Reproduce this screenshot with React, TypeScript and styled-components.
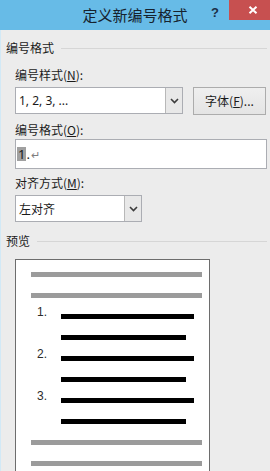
import React from "react";
import styled, { createGlobalStyle } from "styled-components";

const Global = createGlobalStyle`
  html, body { margin: 0; padding: 0; background: #ececec; }
  * { box-sizing: border-box; }
`;

const CJK = `"Noto Sans CJK SC", "Noto Sans", sans-serif`;

const Window = styled.div`
  width: 270px;
  height: 471px;
  overflow: hidden;
  background: #ececec;
  display: flex;
  flex-direction: column;
  font-family: ${CJK};
  color: #1b1b1b;
`;

const TitleBar = styled.div`
  flex: none;
  height: 30px;
  background: #67bbe7;
  display: grid;
  grid-template-columns: 1fr auto 1fr;
  align-items: start;
`;

const Title = styled.div`
  grid-column: 2;
  font-size: 15px;
  line-height: 30px;
  color: #16222e;
`;

const Controls = styled.div`
  grid-column: 3;
  display: flex;
  justify-content: flex-end;
`;

const HelpButton = styled.div`
  width: 28px;
  height: 20px;
  font: bold 13px "Liberation Sans", sans-serif;
  line-height: 25px;
  text-align: center;
  color: #1b2e46;
`;

const CloseButton = styled.div`
  width: 41px;
  height: 20px;
  background: #c75050;
  display: flex;
  align-items: center;
  justify-content: center;
  padding-left: 6px;
`;

const Body = styled.div`
  flex: 1;
  display: flex;
  flex-direction: column;
  padding: 10px 3px 0 5px;
  border-left: 1px solid #d2e9f6;
`;

const GroupHeader = styled.div<{ $mt: number }>`
  display: flex;
  align-items: center;
  height: 16px;
  margin-top: ${(p) => p.$mt}px;
  font-size: 12px;
  line-height: 16px;
`;

const GroupRule = styled.div`
  flex: 1;
  height: 1px;
  margin-left: 7px;
  background: #d6d6d6;
`;

const Section = styled.div`
  display: flex;
  flex-direction: column;
  padding-left: 9px;
`;

const Label = styled.div<{ $mt: number }>`
  margin-top: ${(p) => p.$mt}px;
  font-size: 12px;
  line-height: 16px;
  height: 16px;
`;

const U = styled.span`
  text-decoration: underline;
`;

const Row = styled.div<{ $mt: number }>`
  display: flex;
  align-items: flex-start;
  gap: 10px;
  margin-top: ${(p) => p.$mt}px;
`;

const Select = styled.div<{ $w: number; $mt?: number }>`
  width: ${(p) => p.$w}px;
  height: 27px;
  margin-top: ${(p) => p.$mt ?? 0}px;
  border: 1px solid #abadb3;
  background: #fff;
  display: flex;
  flex: none;
`;

const SelectValue = styled.div<{ $latin?: boolean }>`
  flex: 1;
  padding-left: 3px;
  font-family: ${(p) => (p.$latin ? `"Noto Sans", sans-serif` : CJK)};
  font-size: 12px;
  line-height: 25px;
  color: #1b1b1b;
`;

const SelectArrow = styled.div`
  width: 17px;
  border-left: 1px solid #b8b8b8;
  background: #e8e8e8;
  display: flex;
  align-items: center;
  justify-content: center;
`;

const Button = styled.div`
  width: 73px;
  height: 28px;
  border: 1px solid #acacac;
  background: linear-gradient(#efefef, #e4e4e4);
  font-size: 12px;
  line-height: 26px;
  text-align: center;
  flex: none;
`;

const Input = styled.div<{ $mt: number }>`
  margin-top: ${(p) => p.$mt}px;
  height: 30px;
  border: 1px solid #abadb3;
  background: #fff;
  display: flex;
  align-items: center;
  padding-left: 1px;
  font-family: "Noto Sans", sans-serif;
  font-size: 13px;
`;

const Selected = styled.span`
  background: #a0a0a0;
  color: #1b1b1b;
  line-height: 14px;
  padding: 0 1px;
`;

const Period = styled.span`
  color: #1b1b1b;
`;

const Pilcrow = styled.span`
  color: #7e7e7e;
  font-size: 11px;
  margin-left: 1px;
`;

const Preview = styled.div`
  flex: none;
  margin-top: 10px;
  width: 195px;
  height: 260px;
  border: 1px solid #6d6d6d;
  background: #fff;
  padding-top: 4px;
  display: flex;
  flex-direction: column;
`;

const PreviewRow = styled.div`
  height: 21px;
  display: flex;
  align-items: flex-start;
  flex: none;
`;

const GreyBar = styled.div`
  margin: 8px 0 0 15px;
  width: 171px;
  height: 5px;
  background: #9b9b9b;
`;

const Num = styled.div`
  width: 45px;
  padding-left: 21px;
  font-family: "Liberation Sans", Arial, sans-serif;
  font-size: 12px;
  line-height: 13px;
  color: #2b2b2b;
`;

const BlackBar = styled.div<{ $w: number }>`
  margin-top: 8px;
  width: ${(p) => p.$w}px;
  height: 5px;
  background: #000;
`;

const Chevron = () => (
  <svg width="9" height="6" viewBox="0 0 9 6">
    <path d="M1 1 L4.5 4.5 L8 1" fill="none" stroke="#3c3c3c" strokeWidth="1.6" />
  </svg>
);

const CloseIcon = () => (
  <svg width="10" height="8" viewBox="0 0 10 8">
    <path d="M1.5 0.8 L8.5 7.2 M8.5 0.8 L1.5 7.2" stroke="#fff" strokeWidth="2" />
  </svg>
);

const Item = ({ n }: { n: number }) => (
  <>
    <PreviewRow>
      <Num>{n}.</Num>
      <BlackBar $w={133} />
    </PreviewRow>
    <PreviewRow>
      <Num />
      <BlackBar $w={125} />
    </PreviewRow>
  </>
);

export default function App() {
  return (
    <>
      <Global />
      <Window>
        <TitleBar>
          <Title>定义新编号格式</Title>
          <Controls>
            <HelpButton>?</HelpButton>
            <CloseButton>
              <CloseIcon />
            </CloseButton>
          </Controls>
        </TitleBar>
        <Body>
          <GroupHeader $mt={0}>
            编号格式
            <GroupRule />
          </GroupHeader>
          <Section>
            <Label $mt={11}>
              编号样式(<U>N</U>):
            </Label>
            <Row $mt={4}>
              <Select $w={168}>
                <SelectValue $latin>1, 2, 3, ...</SelectValue>
                <SelectArrow>
                  <Chevron />
                </SelectArrow>
              </Select>
              <Button>
                字体(<U>F</U>)...
              </Button>
            </Row>
            <Label $mt={7}>
              编号格式(<U>O</U>):
            </Label>
            <Input $mt={1}>
              <Selected>1</Selected>
              <Period>.</Period>
              <Pilcrow>↵</Pilcrow>
            </Input>
            <Label $mt={6}>
              对齐方式(<U>M</U>):
            </Label>
            <Select $w={127} $mt={4}>
              <SelectValue>左对齐</SelectValue>
              <SelectArrow>
                <Chevron />
              </SelectArrow>
            </Select>
          </Section>
          <GroupHeader $mt={11}>
            预览
            <GroupRule />
          </GroupHeader>
          <Section>
            <Preview>
              <PreviewRow>
                <GreyBar />
              </PreviewRow>
              <PreviewRow>
                <GreyBar />
              </PreviewRow>
              <Item n={1} />
              <Item n={2} />
              <Item n={3} />
              <PreviewRow>
                <GreyBar />
              </PreviewRow>
              <PreviewRow>
                <GreyBar />
              </PreviewRow>
            </Preview>
          </Section>
        </Body>
      </Window>
    </>
  );
}
